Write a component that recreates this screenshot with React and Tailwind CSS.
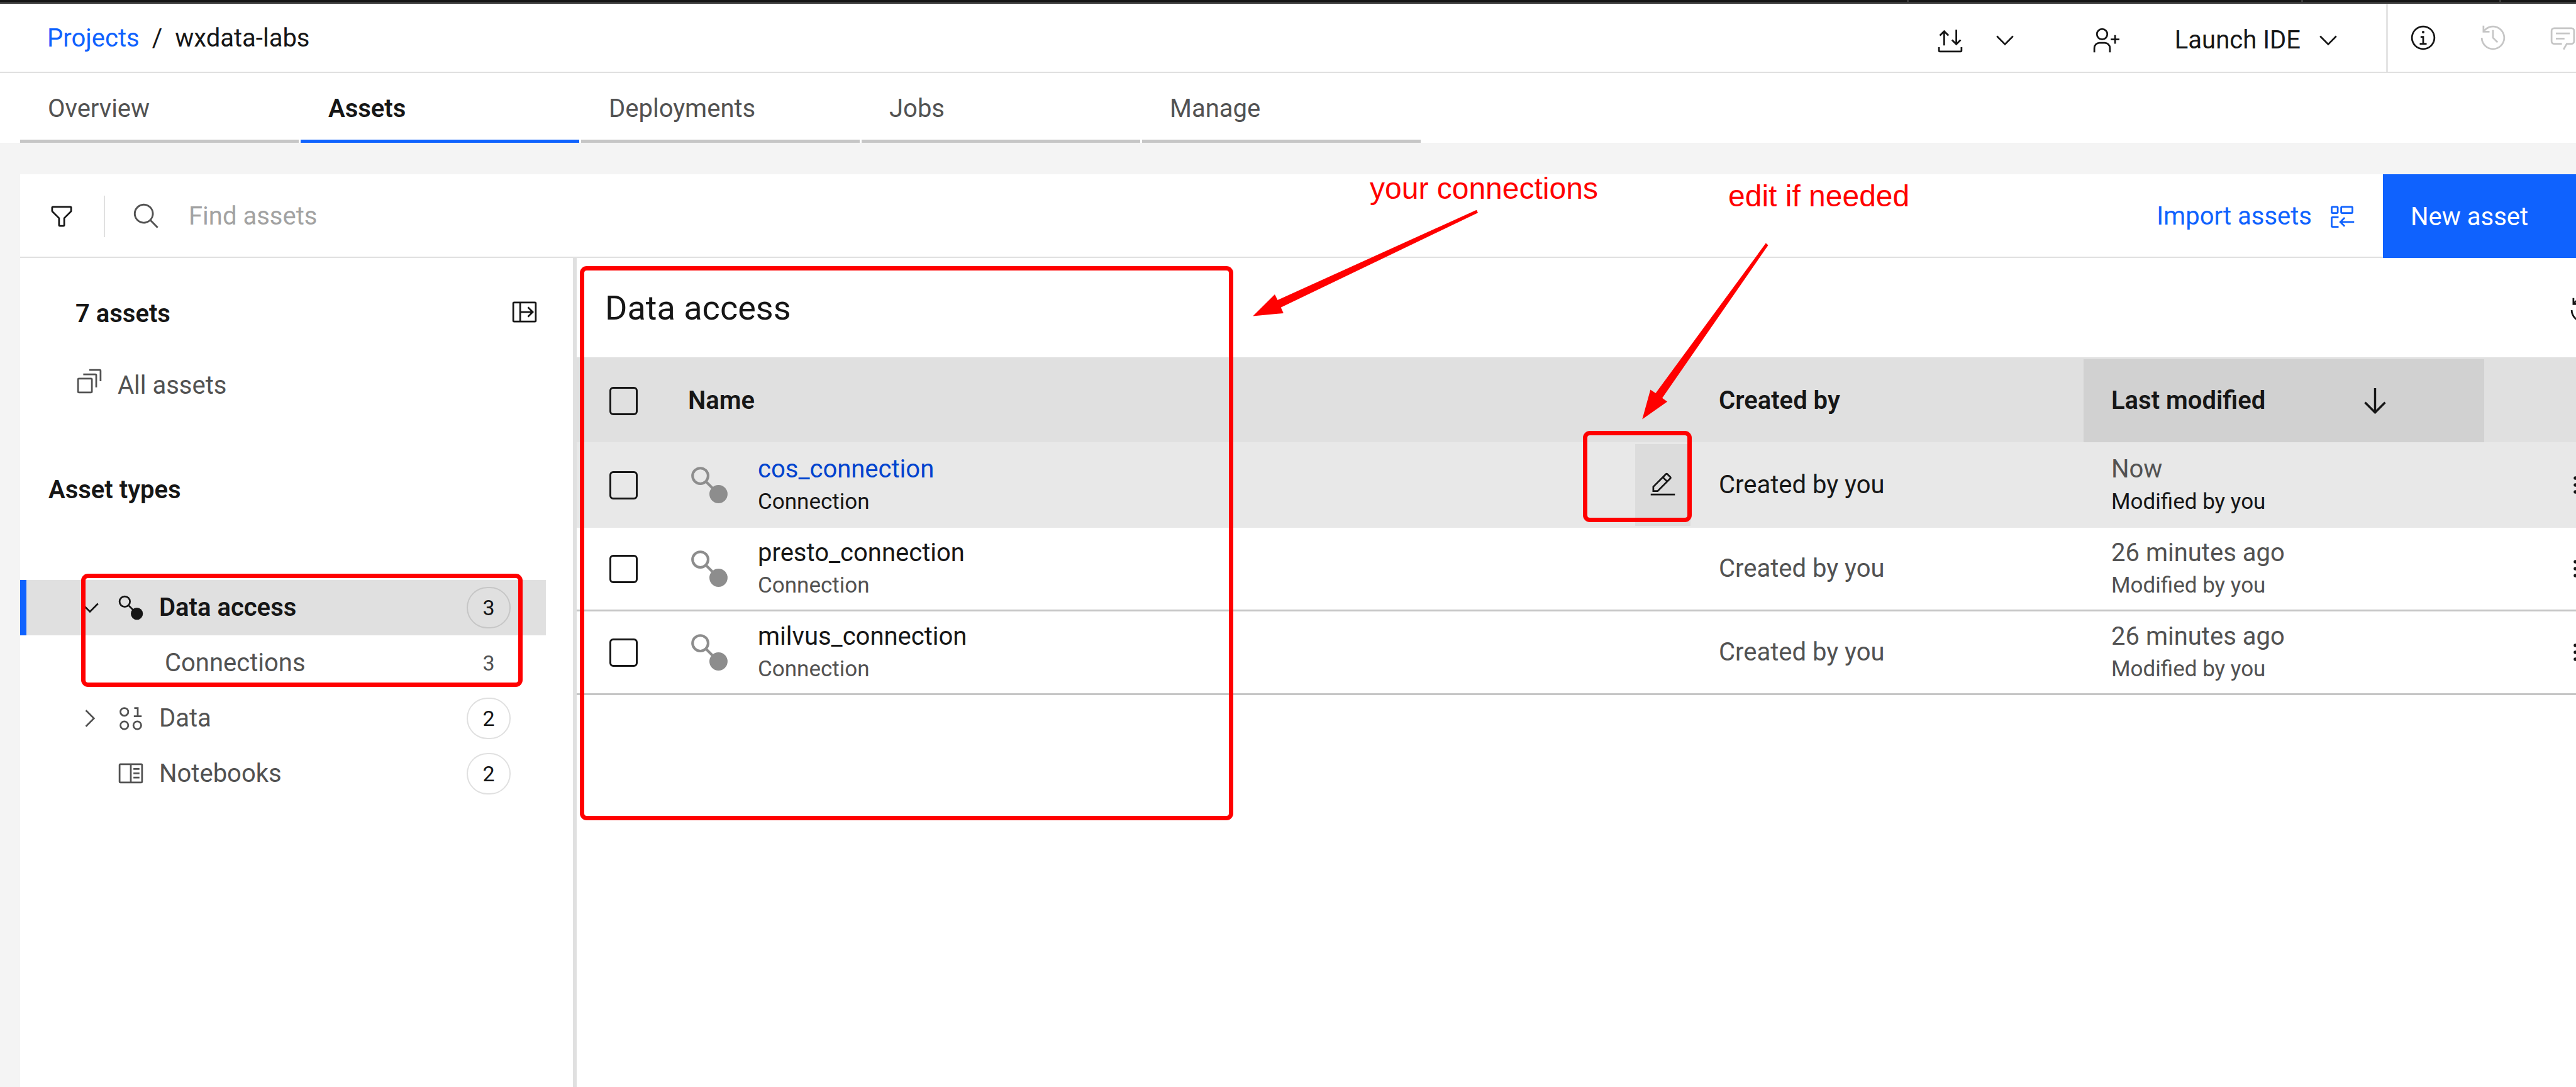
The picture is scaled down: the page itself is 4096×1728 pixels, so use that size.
import React from "react";

function Icon({ size = "size-[44px]", className = "", children }) {
  return (
    <svg viewBox="0 0 32 32" fill="currentColor" aria-hidden="true" className={`${size} shrink-0 ${className}`}>
      {children}
    </svg>
  );
}

function LineIcon({ size = "size-[44px]", className = "", children }) {
  return (
    <svg viewBox="0 0 32 32" fill="none" stroke="currentColor" strokeWidth="2" aria-hidden="true" className={`${size} shrink-0 ${className}`}>
      {children}
    </svg>
  );
}

const ChevronDown = () => (
  <Icon>
    <path d="M16 22 6 12l1.4-1.4 8.6 8.6 8.6-8.6L26 12z" />
  </Icon>
);

const ChevronRight = () => (
  <Icon>
    <path d="M22 16 12 26l-1.4-1.4 8.6-8.6-8.6-8.6L12 6z" />
  </Icon>
);

const TransferIcon = () => (
  <LineIcon>
    <path d="M9 22V5M4 10.600l5-5 5 5M23 3.800V21M18 15.600l5 5 5-5" />
    <path d="M3 24v4a1 1 0 0 0 1 1h24a1 1 0 0 0 1-1v-4" />
  </LineIcon>
);

const UserFollowIcon = () => (
  <Icon>
    <path d="M32 14h-4v-4h-2v4h-4v2h4v4h2v-4h4z" />
    <path d="M12 4a5 5 0 1 1-5 5 5 5 0 0 1 5-5m0-2a7 7 0 1 0 7 7 7 7 0 0 0-7-7z" />
    <path d="M22 30h-2v-5a5 5 0 0 0-5-5H9a5 5 0 0 0-5 5v5H2v-5a7 7 0 0 1 7-7h6a7 7 0 0 1 7 7z" />
  </Icon>
);

const InfoIcon = () => (
  <Icon>
    <path d="M17 22v-8h-4v2h2v6h-3v2h8v-2zM16 8a1.5 1.500 0 1 0 1.500 1.500A1.500 1.500 0 0 0 16 8z" />
    <path d="M16 30a14 14 0 1 1 14-14 14 14 0 0 1-14 14zm0-26a12 12 0 1 0 12 12A12 12 0 0 0 16 4z" />
  </Icon>
);

const HistoryIcon = () => (
  <Icon>
    <path d="M20.590 22 15 16.410V7h2v8.580l5 5.010z" />
    <path d="M16 2A13.940 13.940 0 0 0 6 6.230V2H4v8h8V8H7.080A12 12 0 1 1 4 16H2A14 14 0 1 0 16 2z" />
  </Icon>
);

const ChatIcon = () => (
  <Icon>
    <path d="M17.740 30 16 29l4-7h6a2 2 0 0 0 2-2V8a2 2 0 0 0-2-2H6a2 2 0 0 0-2 2v12a2 2 0 0 0 2 2h9v2H6a4 4 0 0 1-4-4V8a4 4 0 0 1 4-4h20a4 4 0 0 1 4 4v12a4 4 0 0 1-4 4h-4.840z" />
    <path d="M8 10h16v2H8zM8 16h10v2H8z" />
  </Icon>
);

const FilterIcon = () => (
  <Icon>
    <path d="M18 28h-4a2 2 0 0 1-2-2v-7.590L4.590 11A2 2 0 0 1 4 9.590V6a2 2 0 0 1 2-2h20a2 2 0 0 1 2 2v3.590A2 2 0 0 1 27.410 11L20 18.410V26a2 2 0 0 1-2 2zM6 6v3.590l8 8V26h4v-8.410l8-8V6z" />
  </Icon>
);

const SearchIcon = () => (
  <Icon size="size-[46px]">
    <path d="M29 27.586l-7.552-7.552a11.018 11.018 0 1 0-1.414 1.414L27.586 29ZM4 13a9 9 0 1 1 9 9 9.010 9.010 0 0 1-9-9Z" />
  </Icon>
);

const ImportIcon = () => (
  <LineIcon>
    <rect x="4" y="5" width="7" height="7" rx="1" />
    <rect x="15" y="5" width="13" height="7" rx="1" />
    <path d="M12 17H5a1 1 0 0 0-1 1v9a1 1 0 0 0 1 1h7M30 22.500H14.500M19 17.500l-5 5 5 5" />
  </LineIcon>
);

const PanelIcon = () => (
  <LineIcon>
    <rect x="3" y="5" width="26" height="22" rx="1" />
    <path d="M11 5v22M11 16h14M20 10.500l5.500 5.500-5.500 5.500" />
  </LineIcon>
);

const StackIcon = () => (
  <LineIcon>
    <rect x="3" y="13" width="16" height="16" rx="1" />
    <path d="M9 8h14a1 1 0 0 1 1 1v14M16 3h12a1 1 0 0 1 1 1v12" />
  </LineIcon>
);

const ConnectionIcon = ({ size, className }) => (
  <LineIcon size={size} className={className}>
    <circle cx="9" cy="9" r="6" />
    <path d="M13.200 13.200 20 20" />
    <circle cx="23" cy="23" r="7" fill="currentColor" stroke="none" />
  </LineIcon>
);

const DataIcon = () => (
  <LineIcon>
    <circle cx="8.500" cy="8.500" r="4.500" />
    <circle cx="8.500" cy="24" r="4.500" />
    <circle cx="23.500" cy="24" r="4.500" />
    <path d="M25 12.500V3h-5v2h3v7.500h-3.500v2h9v-2z" fill="currentColor" stroke="none" />
  </LineIcon>
);

const NotebookIcon = () => (
  <LineIcon>
    <rect x="3" y="5" width="26" height="21" rx="1" />
    <path d="M16 5v21M19 10.500h7M19 15.500h7M19 20.500h7" />
  </LineIcon>
);

const ArrowDownIcon = () => (
  <Icon size="size-[55px]">
    <path d="M24.590 16.590 17 24.170V4h-2v20.170l-7.590-7.580L6 18l10 10 10-10z" />
  </Icon>
);

const EditIcon = () => (
  <Icon>
    <path d="M2 26h28v2H2zM25.400 9c.8-.8.8-2 0-2.800l-3.600-3.600c-.8-.8-2-.8-2.800 0l-15 15V24h6.400zM20.400 4 24 7.600l-3 3L17.400 7zM6 22v-3.600l10-10 3.600 3.600-10 10z" />
  </Icon>
);

const MenuDotsIcon = () => (
  <Icon>
    <circle cx="16" cy="8" r="2" />
    <circle cx="16" cy="16" r="2" />
    <circle cx="16" cy="24" r="2" />
  </Icon>
);

function TopBar() {
  return (
    <>
      <div className="flex h-[6px] justify-end border-b-[3px] border-[#393939] bg-[#161616]">
        <span className="w-[627px] border-l-[3px] border-[#393939]" />
        <span className="w-[315px] border-l-[3px] border-[#393939]" />
        <span className="w-[122px] border-l-[3px] border-[#393939]" />
      </div>
      <header className="flex h-[110px] border-b-[2px] border-[#e0e0e0]">
        <nav aria-label="Breadcrumb" className="flex items-center gap-[20px] pt-[2px] pl-[75px]">
          <a href="#projects" className="text-[#0f62fe]">Projects</a>
          <span>/</span>
          <span>wxdata-labs</span>
        </nav>
        <div className="ml-auto flex shrink-0">
          <div className="flex items-center pt-[8px] pr-[70px]">
            <button aria-label="Import or export"><TransferIcon /></button>
            <button aria-label="More transfer options" className="ml-[43px]"><ChevronDown /></button>
            <button aria-label="Add collaborator" className="ml-[116px]"><UserFollowIcon /></button>
            <button className="ml-[88px] flex items-center gap-[22px]">
              Launch IDE
              <ChevronDown />
            </button>
          </div>
          <div className="flex w-[302px] border-l-[3px] border-[#e5e5e5]">
            <button aria-label="Information" className="flex w-[111px] shrink-0 items-center justify-center"><InfoIcon /></button>
            <button aria-label="History" disabled className="flex w-[111px] shrink-0 items-center justify-center text-[#c6c6c6]"><HistoryIcon /></button>
            <button aria-label="Comments" disabled className="flex w-[111px] shrink-0 items-center justify-center text-[#c6c6c6]"><ChatIcon /></button>
          </div>
        </div>
      </header>
    </>
  );
}

function Tabs() {
  const tabs = ["Overview", "Assets", "Deployments", "Jobs", "Manage"];
  return (
    <div role="tablist" className="flex gap-[3px] pl-[32px]">
      {tabs.map((tab) => (
        <button
          key={tab}
          role="tab"
          aria-selected={tab === "Assets"}
          className={
            tab === "Assets"
              ? "h-[111px] w-[443px] border-b-[5px] border-[#0f62fe] pt-[8px] pl-[44px] text-left font-semibold text-[#161616]"
              : "h-[111px] w-[443px] border-b-[5px] border-[#c6c6c6] pt-[8px] pl-[44px] text-left text-[#525252]"
          }
        >
          {tab}
        </button>
      ))}
    </div>
  );
}

function Toolbar() {
  return (
    <div className="flex h-[133px]">
      <div className="flex grow items-center border-b-[2px] border-[#e0e0e0] pt-[3px] pl-[44px]">
        <button aria-label="Filter"><FilterIcon /></button>
        <span className="ml-[45px] h-[66px] w-[2px] bg-[#e0e0e0]" />
        <label htmlFor="find" className="ml-[43px] text-[#525252]">
          <SearchIcon />
        </label>
        <input
          id="find"
          type="search"
          aria-label="Find assets"
          placeholder="Find assets"
          className="ml-[44px] grow bg-transparent outline-none placeholder:text-[#a2a2a2]"
        />
        <button className="flex items-center gap-[26px] pr-[43px] text-[#0f62fe]">
          Import assets
          <ImportIcon />
        </button>
      </div>
      <button className="w-[307px] bg-[#0f62fe] pt-[3px] pl-[44px] text-left text-white">New asset</button>
    </div>
  );
}

function Badge({ count, selected }) {
  return (
    <span
      className={
        selected
          ? "ml-auto flex h-[66px] w-[70px] items-center justify-center rounded-full border-[2px] border-[#c6c6c6] text-[34px] text-[#161616]"
          : "ml-auto flex h-[66px] w-[70px] items-center justify-center rounded-full border-[2px] border-[#e0e0e0] text-[34px] text-[#161616]"
      }
    >
      {count}
    </span>
  );
}

function Sidebar() {
  return (
    <aside className="w-[885px] shrink-0 border-r-[6px] border-[#e0e0e0] pt-[64px]">
      <div className="flex items-start justify-between pr-[55px] pl-[88px]">
        <h2 className="leading-[50px] font-semibold">7 assets</h2>
        <button aria-label="Toggle side panel"><PanelIcon /></button>
      </div>
      <button className="mt-[60px] flex items-start gap-[23px] pl-[88px] text-[#525252]">
        <StackIcon />
        <span className="pt-[4px] leading-[50px]">All assets</span>
      </button>
      <h2 className="mt-[116px] pl-[45px] leading-[50px] font-semibold">Asset types</h2>
      <ul className="mt-[118px] mr-[43px]">
        <li>
          <button aria-expanded="true" className="flex h-[88px] w-full items-center border-l-[10px] border-[#0f62fe] bg-[#e0e0e0] pr-[56px] pl-[79px]">
            <ChevronDown />
            <ConnectionIcon className="ml-[21px]" />
            <span className="ml-[23px] font-semibold">Data access</span>
            <Badge count="3" selected />
          </button>
        </li>
        <li>
          <button className="flex h-[88px] w-full items-center border-l-[10px] border-transparent pr-[56px] pl-[220px] text-[#525252]">
            Connections
            <span className="ml-auto w-[70px] text-center text-[34px]">3</span>
          </button>
        </li>
        <li>
          <button aria-expanded="false" className="flex h-[88px] w-full items-center border-l-[10px] border-transparent pr-[56px] pl-[79px] text-[#525252]">
            <ChevronRight />
            <span className="ml-[21px]"><DataIcon /></span>
            <span className="ml-[23px]">Data</span>
            <Badge count="2" />
          </button>
        </li>
        <li>
          <button className="flex h-[88px] w-full items-center border-l-[10px] border-transparent pr-[56px] pl-[144px] text-[#525252]">
            <NotebookIcon />
            <span className="ml-[23px]">Notebooks</span>
            <Badge count="2" />
          </button>
        </li>
      </ul>
    </aside>
  );
}

function Checkbox({ label }) {
  return (
    <input
      type="checkbox"
      aria-label={label}
      className="block size-[45px] appearance-none rounded-[6px] border-[3px] border-[#161616]"
    />
  );
}

const rows = [
  { name: "cos_connection", modified: "Now", active: true },
  { name: "presto_connection", modified: "26 minutes ago", active: false },
  { name: "milvus_connection", modified: "26 minutes ago", active: false },
];

function AssetRow({ name, modified, active }) {
  const strong = active ? "text-[#161616]" : "text-[#525252]";
  return (
    <tr
      className={
        active
          ? "bg-[#e8e8e8] [&>td]:border-t-[3px] [&>td]:border-b-[3px] [&>td]:border-[#e8e8e8]"
          : "[&>td]:border-b-[3px] [&>td]:border-[#c6c6c6]"
      }
    >
      <td className="pl-[52px]">
        <Checkbox label={`Select ${name}`} />
      </td>
      <td>
        <div className="flex h-[130px] items-center pl-[44px]">
          <ConnectionIcon size="size-[66px]" className="text-[#8d8d8d]" />
          <div className="ml-[44px] pb-px">
            <a href={`#${name}`} className={active ? "block leading-[54px] text-[#0043ce]" : "block leading-[54px] text-[#161616]"}>
              {name}
            </a>
            <div className={`text-[35px] leading-[50px] ${strong}`}>Connection</div>
          </div>
          {active && (
            <button aria-label={`Edit ${name}`} className="mr-[2px] ml-auto flex h-[130px] w-[88px] items-center justify-center bg-[#dcdcdc]">
              <EditIcon />
            </button>
          )}
        </div>
      </td>
      <td className={`pl-[43px] ${strong}`}>Created by you</td>
      <td className="pl-[44px]">
        <div className="leading-[54px] text-[#525252]">{modified}</div>
        <div className={`pb-px text-[35px] leading-[50px] ${strong}`}>Modified by you</div>
      </td>
      <td className="pl-[123px]">
        <button aria-label={`Actions for ${name}`} className="block"><MenuDotsIcon /></button>
      </td>
    </tr>
  );
}

function AssetTable() {
  return (
    <section className="min-w-0 grow overflow-clip">
      <div className="flex h-[158px] w-[calc(100%+33px)] items-center justify-between pl-[45px]">
        <h1 className="pt-[2px] text-[54px]">Data access</h1>
        <button aria-label="Refresh" className="pt-[8px]"><HistoryIcon /></button>
      </div>
      <table className="w-[calc(100%+143px)] table-fixed border-separate border-spacing-0 text-left">
        <colgroup>
          <col className="w-[134px]" />
          <col />
          <col className="w-[623px]" />
          <col className="w-[637px]" />
          <col className="w-[289px]" />
        </colgroup>
        <thead>
          <tr className="bg-[#e0e0e0] [&>th]:border-t-[3px] [&>th]:border-[#e0e0e0]">
            <th className="pl-[52px]"><Checkbox label="Select all assets" /></th>
            <th className="pl-[43px] font-semibold">Name</th>
            <th className="pl-[43px] font-semibold">Created by</th>
            <th aria-sort="descending" className="bg-[#d1d1d1]">
              <button className="flex h-[132px] w-full items-center justify-between pr-[146px] pl-[44px] font-semibold">
                Last modified
                <ArrowDownIcon />
              </button>
            </th>
            <th aria-label="Actions" />
          </tr>
        </thead>
        <tbody>
          {rows.map((row) => (
            <AssetRow key={row.name} {...row} />
          ))}
        </tbody>
      </table>
    </section>
  );
}

function Annotations() {
  return (
    <div className="pointer-events-none font-['Liberation_Sans',sans-serif] text-[48px] leading-[54px] whitespace-nowrap text-[#ff0000]">
      <div className="absolute top-[912px] left-[129px] h-[180px] w-[702px] rounded-[11px] border-[7px] border-[#ff0000]" />
      <div className="absolute top-[423px] left-[922px] h-[881px] w-[1039px] rounded-[11px] border-[7px] border-[#ff0000]" />
      <div className="absolute top-[685px] left-[2517px] h-[145px] w-[173px] rounded-[11px] border-[7px] border-[#ff0000]" />
      <p className="absolute top-[273px] left-[2178px]">your connections</p>
      <p className="absolute top-[285px] left-[2748px]">edit if needed</p>
      <svg viewBox="0 0 362 176" fill="currentColor" aria-hidden="true" className="absolute top-[330px] left-[1990px] h-[176px] w-[362px]">
        <path d="M2.200 172.600 37 138l4.500 8.900L357.800 3.800l2.200 4.400L46.700 158.800l4.200 9.100z" />
      </svg>
      <svg viewBox="0 0 206 286" fill="currentColor" aria-hidden="true" className="absolute top-[383px] left-[2609px] h-[286px] w-[206px]">
        <path d="M2.300 283.400 15.300 236.400l8.300 5.500L198.800 3.600l3.800 3.100L34.100 249.700l8 5.800z" />
      </svg>
    </div>
  );
}

export default function App() {
  return (
    <div className="relative flex min-h-screen flex-col overflow-clip bg-white font-[Roboto,sans-serif] text-[40px] leading-[50px] text-[#161616]">
      <TopBar />
      <Tabs />
      <main className="flex grow flex-col bg-[#f4f4f4] pt-[50px] pl-[32px]">
        <div className="flex grow flex-col bg-white">
          <Toolbar />
          <div className="flex grow">
            <Sidebar />
            <AssetTable />
          </div>
        </div>
      </main>
      <Annotations />
    </div>
  );
}
